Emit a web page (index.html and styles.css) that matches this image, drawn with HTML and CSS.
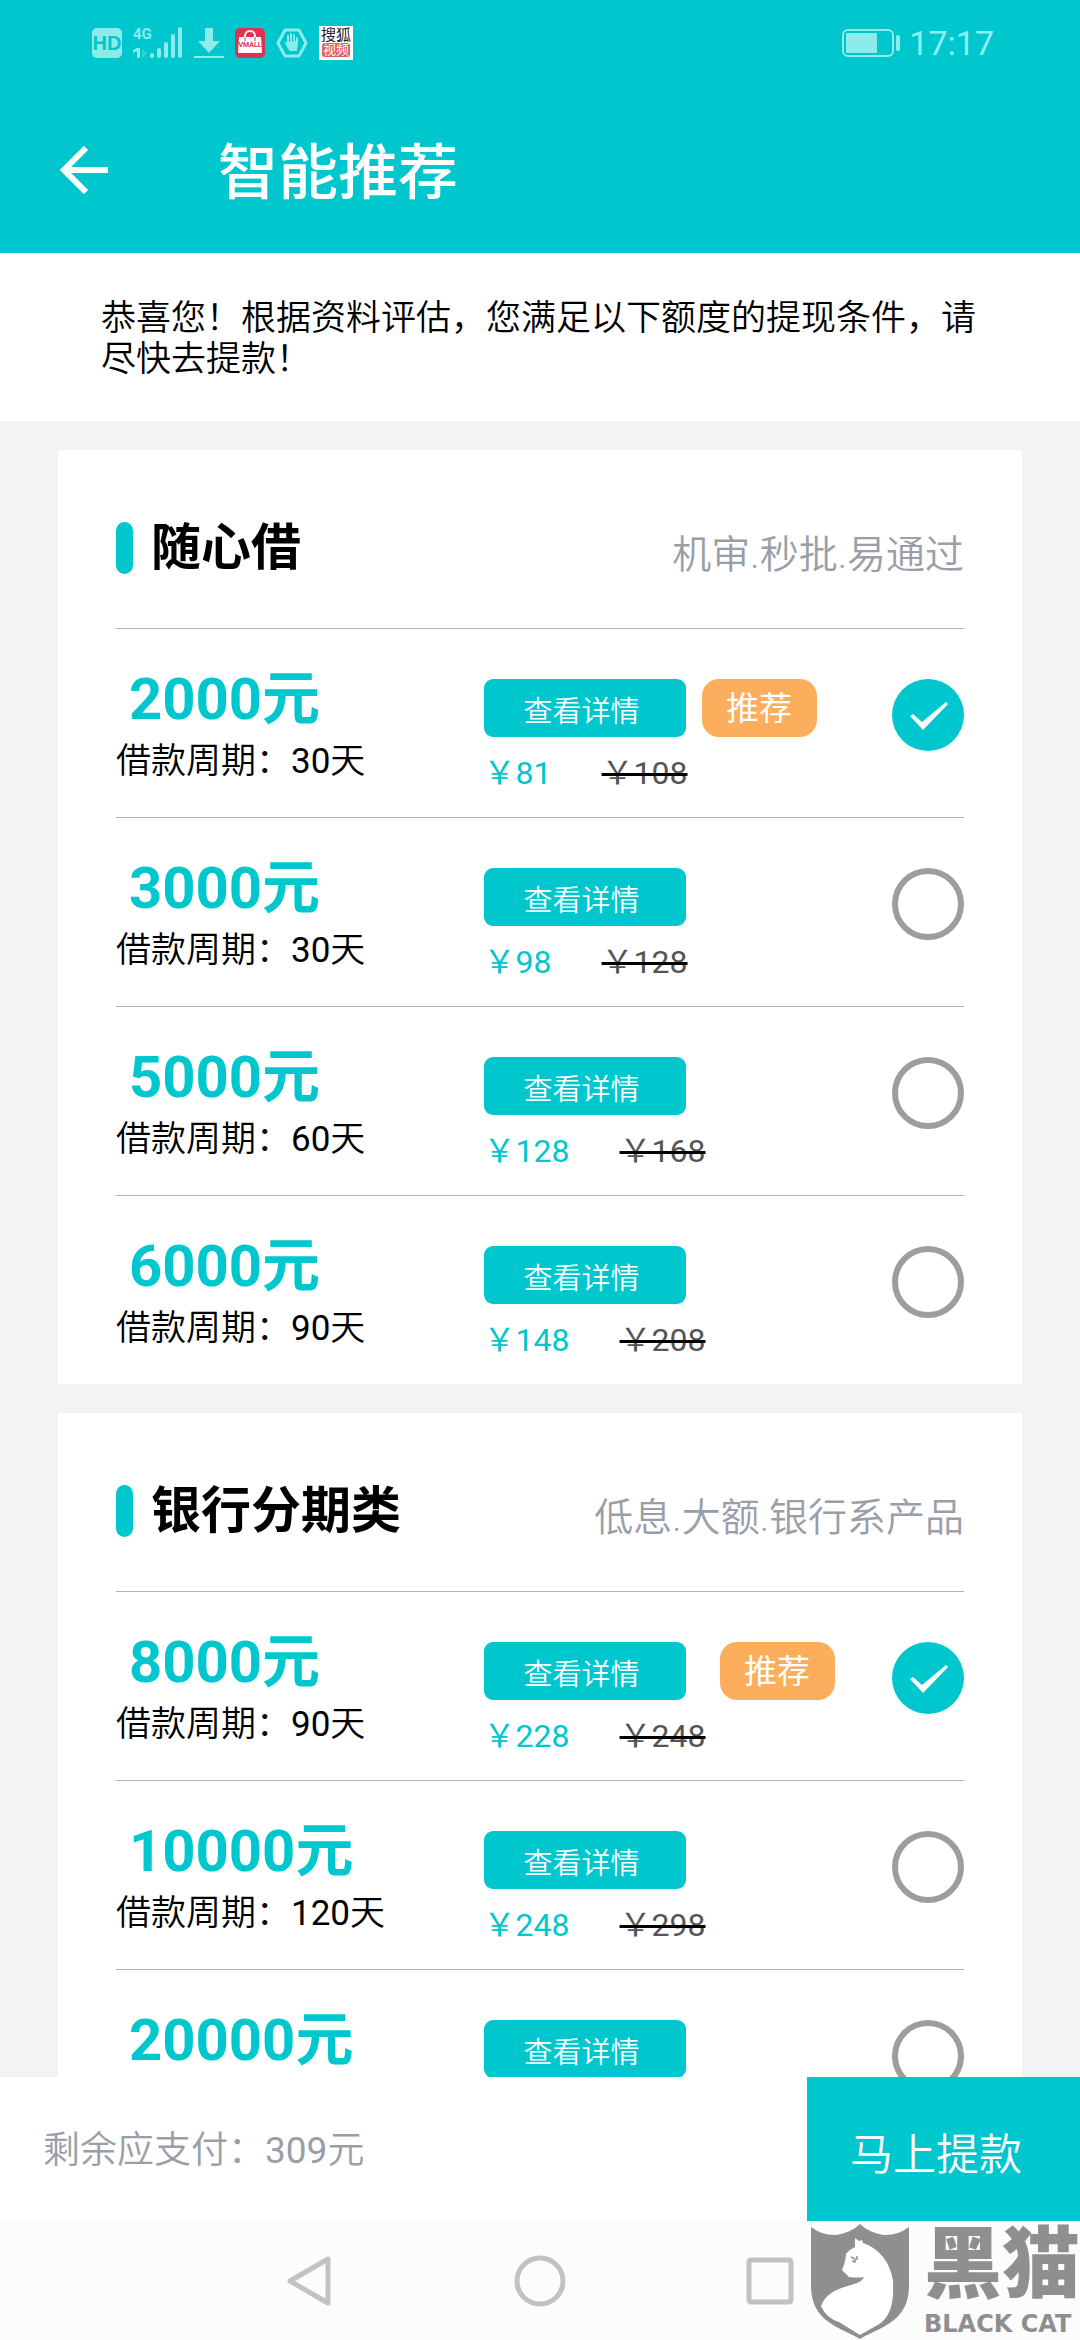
FILE: index.html
```html
<!DOCTYPE html>
<html lang="zh-CN">
<head>
<meta charset="utf-8">
<meta name="viewport" content="width=device-width, initial-scale=1">
<title>智能推荐</title>
<link rel="stylesheet" href="styles.css">
</head>
<body>
<div class="app">
  <header class="top">
    <div class="status">
      <div class="status-icons">
        <span class="hd">HD</span>
        <span class="signal">
          <span class="signal-net">4G</span>
          <svg class="signal-bars" viewBox="0 0 50 32" aria-hidden="true"><path class="faint" d="M9 22l6 4-6 5z"/><path d="M0 23l4-2h3v10H4v-7l-4 2z"/><rect x="17" y="26" width="4" height="5" rx="2"/><rect x="24" y="21" width="4" height="10" rx="2"/><rect x="31" y="15" width="4" height="16" rx="2"/><rect x="38" y="7" width="4" height="24" rx="2"/><rect x="45" y="0" width="4" height="31" rx="2"/></svg>
        </span>
        <svg class="icon-download" viewBox="0 0 30 32" aria-hidden="true"><path d="M11 1h8v13h7L15 26 4 14h7zM0 29h30v2H0z"/></svg>
        <svg class="icon-mall" viewBox="0 0 30 30" aria-hidden="true"><rect width="30" height="30" rx="5" fill="#dc3450"/><path d="M4 9h22l1 16H3z" fill="#fff"/><path d="M10 13V8a5 5 0 0 1 10 0v5" fill="none" stroke="#fff" stroke-width="2"/><path d="M10 13V9M20 13V9" stroke="#dc3450"/><text x="15" y="19" text-anchor="middle" class="mall-text">VMALL</text></svg>
        <svg class="icon-hand" viewBox="0 0 32 30" aria-hidden="true"><path d="M9 2h14l7 13-7 13H9L2 15z" fill="none" stroke="#8debea" stroke-width="3" stroke-linejoin="round"/><path d="M12 16V8M15 15V6M18 15V7M21 16V10M10 15l4 7h6l1-8z" fill="#8debea" stroke="#8debea" stroke-width="2" stroke-linecap="round"/></svg>
        <span class="sohu"><span>搜狐</span><span class="sohu-video">视频</span></span>
      </div>
      <div class="status-right">
        <svg class="icon-battery" viewBox="0 0 59 28" aria-hidden="true"><rect x="1" y="1" width="50" height="26" rx="5" fill="none" stroke="#8debea" stroke-width="2"/><rect x="4" y="4" width="31" height="20" rx="1"/><rect x="54" y="6" width="4" height="16" rx="2"/></svg>
        <time>17:17</time>
      </div>
    </div>
    <div class="titlebar">
      <button class="back" type="button" aria-label="返回"><svg viewBox="0 0 48 48" aria-hidden="true"><path d="M26 2L4 24l22 22M4 24h44" fill="none" stroke="#fff" stroke-width="6"/></svg></button>
      <h1>智能推荐</h1>
    </div>
  </header>

  <p class="notice">恭喜您！根据资料评估，您满足以下额度的提现条件，请尽快去提款！</p>

  <main class="list">
    <section class="card">
      <div class="card-head"><h2>随心借</h2><span class="card-note">机审.秒批.易通过</span></div>
      <div class="row">
        <label class="plan" for="p2000"><span class="amount">2000元</span><span class="period">借款周期：<span class="num">30</span>天</span></label>
        <div class="offer"><div><button class="detail" type="button">查看详情</button><div class="prices"><span class="price">￥81</span><s class="old">￥108</s></div></div><span class="badge">推荐</span></div>
        <input class="pick" type="radio" name="quick" id="p2000" checked>
      </div>
      <div class="row">
        <label class="plan" for="p3000"><span class="amount">3000元</span><span class="period">借款周期：<span class="num">30</span>天</span></label>
        <div class="offer"><div><button class="detail" type="button">查看详情</button><div class="prices"><span class="price">￥98</span><s class="old">￥128</s></div></div></div>
        <input class="pick" type="radio" name="quick" id="p3000">
      </div>
      <div class="row">
        <label class="plan" for="p5000"><span class="amount">5000元</span><span class="period">借款周期：<span class="num">60</span>天</span></label>
        <div class="offer"><div><button class="detail" type="button">查看详情</button><div class="prices"><span class="price">￥128</span><s class="old">￥168</s></div></div></div>
        <input class="pick" type="radio" name="quick" id="p5000">
      </div>
      <div class="row">
        <label class="plan" for="p6000"><span class="amount">6000元</span><span class="period">借款周期：<span class="num">90</span>天</span></label>
        <div class="offer"><div><button class="detail" type="button">查看详情</button><div class="prices"><span class="price">￥148</span><s class="old">￥208</s></div></div></div>
        <input class="pick" type="radio" name="quick" id="p6000">
      </div>
    </section>

    <section class="card">
      <div class="card-head"><h2>银行分期类</h2><span class="card-note">低息.大额.银行系产品</span></div>
      <div class="row">
        <label class="plan" for="p8000"><span class="amount">8000元</span><span class="period">借款周期：<span class="num">90</span>天</span></label>
        <div class="offer"><div><button class="detail" type="button">查看详情</button><div class="prices"><span class="price">￥228</span><s class="old">￥248</s></div></div><span class="badge">推荐</span></div>
        <input class="pick" type="radio" name="bank" id="p8000" checked>
      </div>
      <div class="row">
        <label class="plan" for="p10000"><span class="amount">10000元</span><span class="period">借款周期：<span class="num">120</span>天</span></label>
        <div class="offer"><div><button class="detail" type="button">查看详情</button><div class="prices"><span class="price">￥248</span><s class="old">￥298</s></div></div></div>
        <input class="pick" type="radio" name="bank" id="p10000">
      </div>
      <div class="row">
        <label class="plan" for="p20000"><span class="amount">20000元</span></label>
        <div class="offer"><div><button class="detail" type="button">查看详情</button></div></div>
        <input class="pick" type="radio" name="bank" id="p20000">
      </div>
    </section>
  </main>

  <footer class="paybar">
    <span class="due">剩余应支付：<span class="num">309</span>元</span>
    <button class="withdraw" type="button">马上提款</button>
  </footer>

  <nav class="sysnav">
    <button type="button" aria-label="返回键"><svg viewBox="0 0 52 52" aria-hidden="true"><path d="M44 4v44L6 26z" stroke-linejoin="round"/></svg></button>
    <button type="button" aria-label="主屏幕"><svg viewBox="0 0 52 52" aria-hidden="true"><circle cx="26" cy="26" r="23"/></svg></button>
    <button type="button" aria-label="最近任务"><svg viewBox="0 0 52 52" aria-hidden="true"><rect x="5" y="5" width="42" height="42" rx="2"/></svg></button>
  </nav>

  <div class="mark">
    <svg class="mark-shield" viewBox="0 0 98 116" aria-hidden="true"><path fill="#908e8f" d="M0 3Q12 12 26 11 41 8 49 0 57 8 72 11 86 12 98 3V62C98 98 69 103 49 115 29 103 0 98 0 62z"/><path fill="#fff" d="M44 14l4 3 3-1 1 3C69 25 79 38 82 57 83 78 80 90 70 99L49 111 28 98Q15 94 10 82C15 68 29 64 43 60Q51 58 53 53 46 54 38 53L31 46 33 41Q35 33 35 30 39 25 44 23z"/><path fill="none" stroke="#908e8f" stroke-width="1.5" d="M40 33l4 2v3l-3-1M46 32v4"/></svg>
    <div class="mark-name"><span class="mark-cn">黑猫</span><span class="mark-en">BLACK CAT</span></div>
  </div>
</div>
</body>
</html>
```
FILE: styles.css
```css
* { box-sizing: border-box; }

:root {
  --teal: #00c7ce;
  --tint: #8debea;
}

body {
  margin: 0;
  font-family: Roboto, "Noto Sans CJK SC", sans-serif;
  color: #000;
  background: #f2f3f5;
}

h1, h2, p { margin: 0; }

button {
  border: 0;
  padding: 0;
  font: inherit;
  color: inherit;
  background: none;
}

.num { font-weight: 400; }

.app {
  position: relative;
  display: flex;
  flex-direction: column;
  height: 100vh;
  overflow: hidden;
}

/* status bar and title */
.top { background: var(--teal); color: #fff; }

.status {
  display: flex;
  justify-content: space-between;
  align-items: center;
  height: 86px;
  padding: 0 86px 0 92px;
}

.status-icons, .status-right { display: flex; align-items: center; gap: 8px; }
.status-icons { gap: 11px; }
.status svg { display: block; fill: var(--tint); }

.hd {
  width: 30px;
  border-radius: 5px;
  background: var(--tint);
  color: var(--teal);
  font: bold 20px/30px "Liberation Sans", sans-serif;
  text-align: center;
}

.signal { position: relative; width: 50px; height: 32px; }
.signal-net {
  position: absolute;
  left: 0;
  top: 0;
  color: var(--tint);
  font: bold 15px/15px Roboto, sans-serif;
}
.signal-bars { width: 50px; height: 32px; }
.signal-bars .faint { opacity: .3; }
.icon-download { width: 30px; height: 32px; }
.icon-mall { width: 30px; height: 30px; }
.mall-text { font: bold 7px Roboto, sans-serif; fill: #dc3450; }
.icon-hand { width: 32px; height: 30px; }

.sohu {
  display: flex;
  flex-direction: column;
  align-items: center;
  width: 34px;
  padding: 1px 0 3px;
  background: #fff;
  color: #222;
  font-size: 15px;
  line-height: 16px;
}
.sohu-video {
  width: 28px;
  border-radius: 3px;
  background: #dd6064;
  color: #fff;
  font-size: 13px;
  line-height: 14px;
  text-align: center;
}

.icon-battery { width: 59px; height: 28px; }
.status time { color: #8ff0f2; font-size: 34px; }

.titlebar {
  display: flex;
  align-items: center;
  gap: 110px;
  height: 167px;
  padding: 0 60px;
}
.back { width: 48px; height: 48px; }
.back svg { display: block; }
.titlebar h1 { padding-top: 8px; font-size: 60px; font-weight: 500; line-height: 80px; }

/* notice */
.notice {
  padding: 45px 101px 41px;
  background: #fff;
  font-size: 35px;
  font-weight: 350;
  line-height: 41px;
}

/* plan cards */
.list {
  flex: 1;
  min-height: 0;
  overflow: hidden;
  padding: 29px 58px 0;
}
.card { padding: 0 58px; background: #fff; }
.card + .card { margin-top: 29px; }

.card-head {
  display: flex;
  justify-content: space-between;
  align-items: center;
  height: 178px;
  padding-top: 18px;
}
.card h2 {
  display: flex;
  align-items: center;
  gap: 18px;
  font-size: 50px;
  line-height: 52px;
}
.card h2::before {
  content: "";
  width: 17px;
  height: 52px;
  border-radius: 9px;
  background: var(--teal);
}
.card-note { padding-top: 6px; color: #9a9ea8; font-size: 39px; font-weight: 350; }

.row {
  display: grid;
  grid-template-columns: 9fr 10fr 72px;
  align-items: start;
  height: 189px;
  border-top: 1px solid #b4b4b4;
  padding-top: 50px;
}

.plan { display: flex; flex-direction: column; margin-top: -14px; }
.amount {
  padding-left: 13px;
  color: var(--teal);
  font-size: 58px;
  font-weight: 700;
  line-height: 68px;
}
.period { font-size: 35px; font-weight: 350; line-height: 58px; }

.offer { display: flex; align-items: flex-start; gap: 14px; }
.detail {
  display: block;
  width: 202px;
  height: 58px;
  padding: 2px 6px 0 0;
  border-radius: 9px;
  background: var(--teal);
  color: #fff;
  font-size: 29px;
  font-weight: 350;
}
.prices {
  display: flex;
  gap: 50px;
  margin-top: 12px;
  font-size: 32px;
  line-height: 48px;
}
.price { color: var(--teal); }
.old { color: #555; text-decoration: line-through #000 3px; }

.badge {
  width: 115px;
  height: 58px;
  padding-top: 2px;
  border-radius: 17px;
  background: #fcae5c;
  color: #fff;
  font-size: 33px;
  line-height: 56px;
  text-align: center;
}

.pick {
  appearance: none;
  width: 72px;
  height: 72px;
  margin: 0;
  border: 6px solid #9d9d9d;
  border-radius: 50%;
}
.pick:checked {
  border: 0;
  background: var(--teal) url("data:image/svg+xml,%3Csvg xmlns='http://www.w3.org/2000/svg' viewBox='0 0 72 72'%3E%3Cpath fill='%23fff' d='M18 37l3-2 9 8 24-20 2 2-25 26z'/%3E%3C/svg%3E") center / cover;
}

/* payment bar */
.paybar {
  display: flex;
  justify-content: space-between;
  align-items: center;
  padding-left: 43px;
  background: #fff;
}
.due { padding-bottom: 4px; color: #9a9ea8; font-size: 37px; font-weight: 350; }
.withdraw {
  height: 144px;
  padding: 4px 58px 0 43px;
  background: var(--teal);
  color: #fff;
  font-size: 43px;
  font-weight: 350;
}

/* system navigation */
.sysnav {
  display: flex;
  justify-content: center;
  align-items: center;
  gap: 178px;
  height: 119px;
  background: #fcfcfc;
}
.sysnav svg {
  display: block;
  width: 52px;
  height: 52px;
  fill: none;
  stroke: #c2c2c2;
  stroke-width: 5;
}

/* watermark laid over the corner */
.mark {
  position: absolute;
  right: 0;
  bottom: 0;
  display: flex;
  gap: 15px;
  color: #908e8f;
}
.mark-shield { width: 98px; height: 116px; }
.mark-name { display: flex; flex-direction: column; width: 156px; }
.mark-cn { font-size: 78px; font-weight: 900; line-height: 84px; }
.mark-en { font: bold 24px/32px "DejaVu Sans", sans-serif; white-space: nowrap; }
```
